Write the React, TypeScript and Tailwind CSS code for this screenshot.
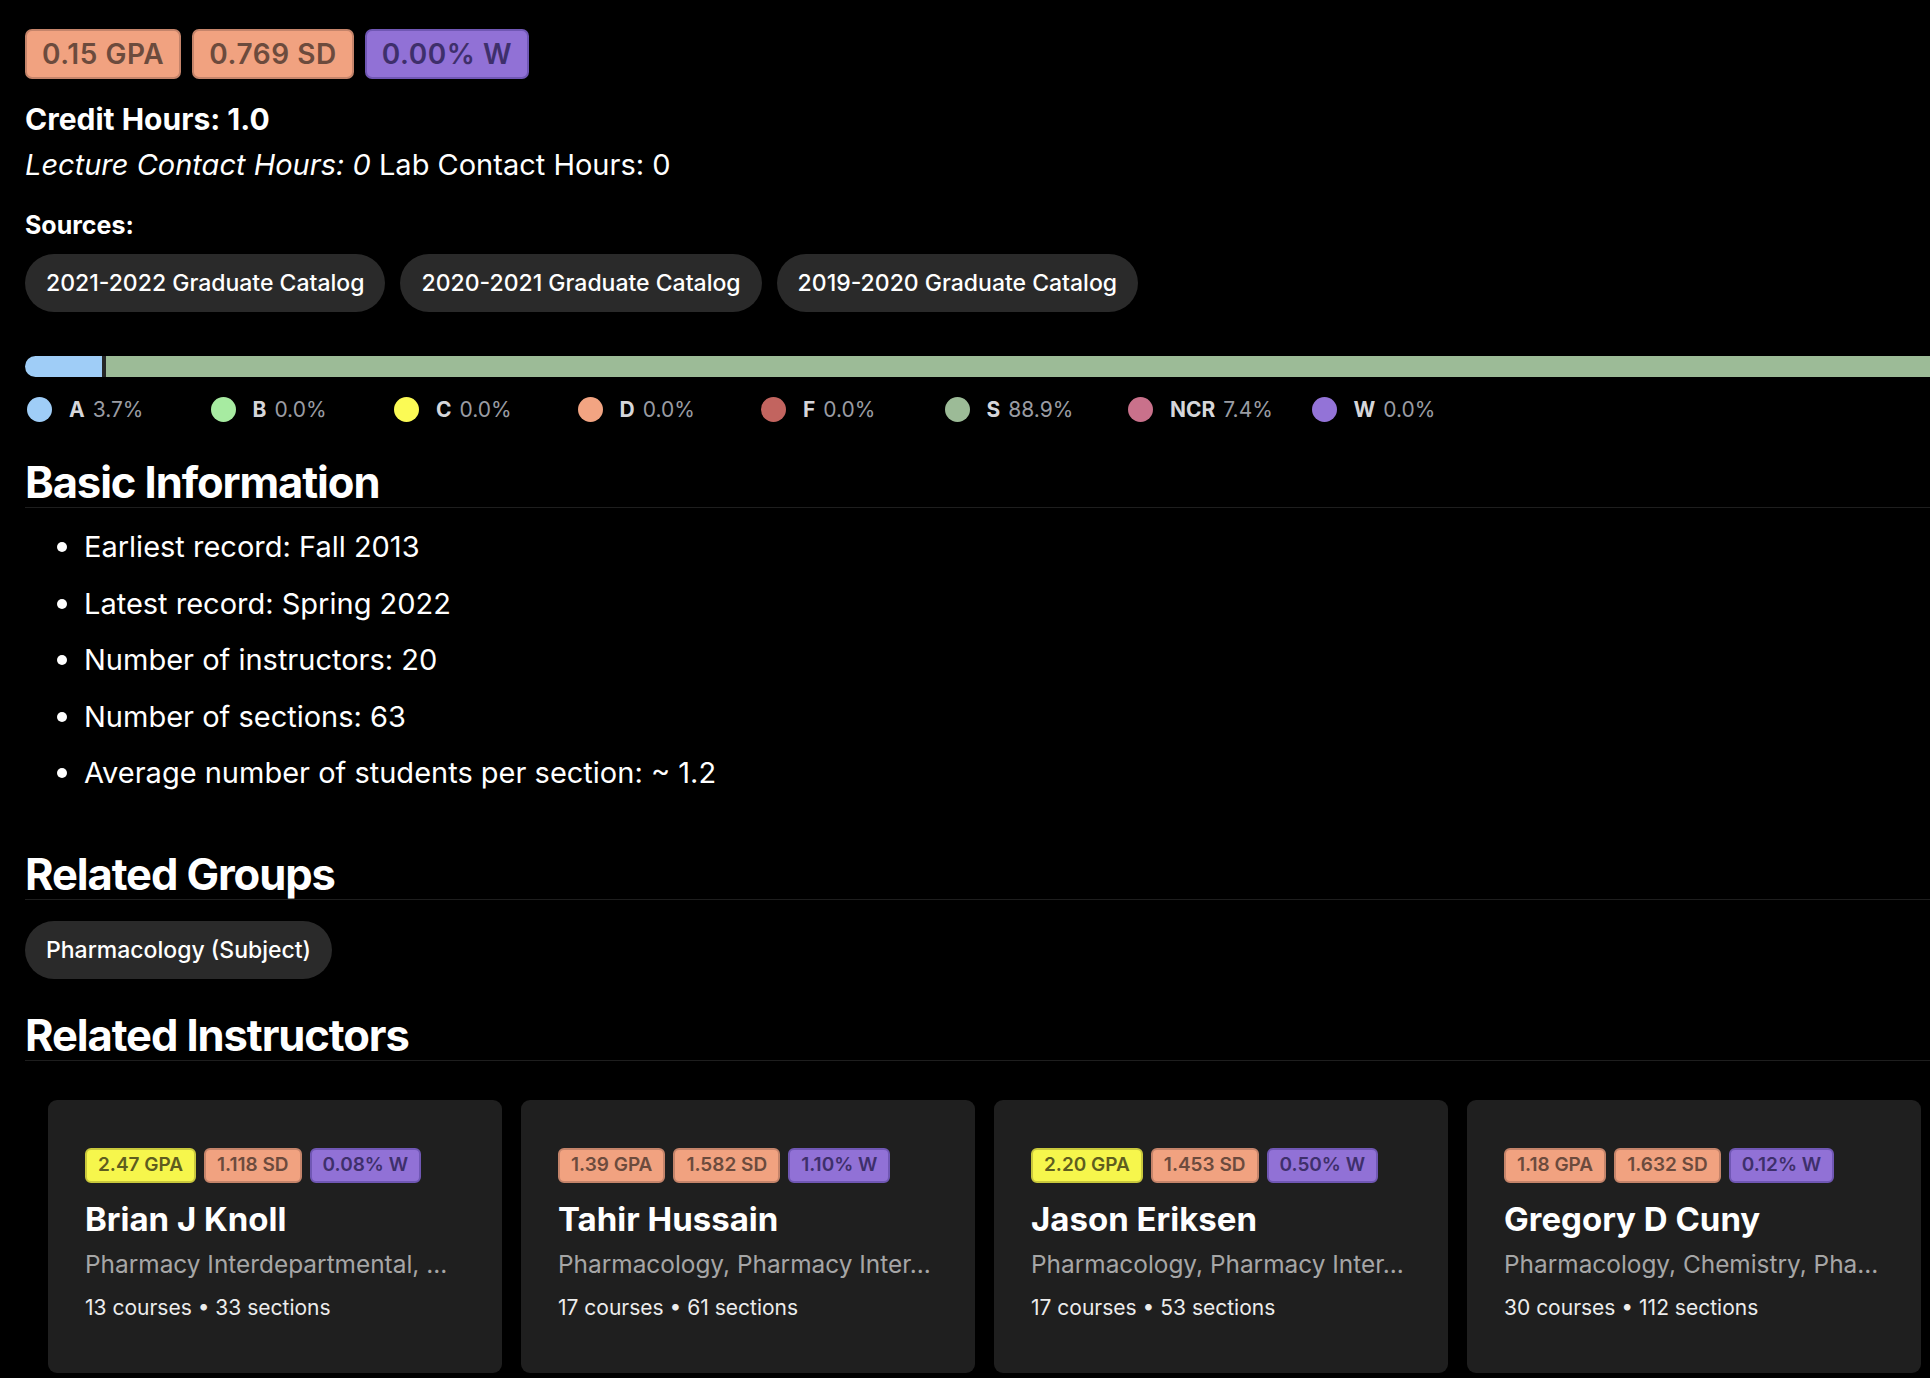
const legend = [
  { label: "A", pct: "3.7%", color: "bg-[#9fcdf7]" },
  { label: "B", pct: "0.0%", color: "bg-[#a7eba1]" },
  { label: "C", pct: "0.0%", color: "bg-[#fbfa55]" },
  { label: "D", pct: "0.0%", color: "bg-[#f2a482]" },
  { label: "F", pct: "0.0%", color: "bg-[#c2645f]" },
  { label: "S", pct: "88.9%", color: "bg-[#9cbb97]" },
  { label: "NCR", pct: "7.4%", color: "bg-[#c9718b]" },
  { label: "W", pct: "0.0%", color: "bg-[#9373d7]" },
];

const segments = [
  { pct: 3.7, color: "bg-[#9fcdf7]" },
  { pct: 88.9, color: "bg-[#9cbb97]" },
  { pct: 7.4, color: "bg-[#c9718b]" },
];

const basics = [
  "Earliest record: Fall 2013",
  "Latest record: Spring 2022",
  "Number of instructors: 20",
  "Number of sections: 63",
  "Average number of students per section: ~ 1.2",
];

type Tone = "orange" | "yellow" | "purple";

const tones: Record<Tone, string> = {
  orange: "bg-[#f1a280] border-[#c5846a] text-[#6c4b3d]",
  yellow: "bg-[#f6f64c] border-[#c9c83c] text-[#5e5d1f]",
  purple: "bg-[#9171d6] border-[#7057b4] text-[#3e2f6b]",
};

const instructors = [
  {
    name: "Brian J Knoll",
    depts: "Pharmacy Interdepartmental, ...",
    gpa: ["2.47 GPA", "yellow"],
    sd: "1.118 SD",
    w: "0.08% W",
    stats: "13 courses • 33 sections",
  },
  {
    name: "Tahir Hussain",
    depts: "Pharmacology, Pharmacy Inter...",
    gpa: ["1.39 GPA", "orange"],
    sd: "1.582 SD",
    w: "1.10% W",
    stats: "17 courses • 61 sections",
  },
  {
    name: "Jason Eriksen",
    depts: "Pharmacology, Pharmacy Inter...",
    gpa: ["2.20 GPA", "yellow"],
    sd: "1.453 SD",
    w: "0.50% W",
    stats: "17 courses • 53 sections",
  },
  {
    name: "Gregory D Cuny",
    depts: "Pharmacology, Chemistry, Pha...",
    gpa: ["1.18 GPA", "orange"],
    sd: "1.632 SD",
    w: "0.12% W",
    stats: "30 courses • 112 sections",
  },
];

function Badge({ tone, children, small }: { tone: Tone; children: string; small?: boolean }) {
  return (
    <span
      className={
        (small
          ? "h-[35px] px-[11px] text-[19px] rounded-[6px] "
          : "h-[50px] px-[15px] text-[28px] tracking-[0.02em] rounded-[7px] ") +
        "flex items-center border-2 font-semibold whitespace-nowrap " +
        tones[tone]
      }
    >
      {children}
    </span>
  );
}

function Pill({ children }: { children: string }) {
  return (
    <span className="flex h-[58px] items-center rounded-full bg-[#2a2a2a] px-[21px] text-[23px] font-medium text-white whitespace-nowrap">
      {children}
    </span>
  );
}

function Heading({ children }: { children: string }) {
  return (
    <h2 className="border-b border-[#1e1e1e] text-[43.5px] leading-[50px] font-bold tracking-tight text-white">
      {children}
    </h2>
  );
}

export default function App() {
  return (
    <div className="min-h-screen overflow-hidden bg-black font-['Inter','Noto_Sans',sans-serif] text-white">
      <div className="w-[2080px] ml-[25px] pt-[29px]">
        <div className="flex gap-[11px]">
          <Badge tone="orange">0.15 GPA</Badge>
          <Badge tone="orange">0.769 SD</Badge>
          <Badge tone="purple">0.00% W</Badge>
        </div>

        <p className="mt-[18px] text-[30px] leading-[45px] font-bold">Credit Hours: 1.0</p>
        <p className="text-[29px] leading-[45px]">
          <i>Lecture Contact Hours: 0</i> Lab Contact Hours: 0
        </p>

        <p className="mt-[23px] text-[25px] leading-[30px] font-bold">Sources:</p>
        <div className="mt-[14px] flex gap-[15px]">
          <Pill>2021-2022 Graduate Catalog</Pill>
          <Pill>2020-2021 Graduate Catalog</Pill>
          <Pill>2019-2020 Graduate Catalog</Pill>
        </div>

        <div className="mt-[44px] flex h-[21px] w-full overflow-hidden rounded-full">
          {segments.map((s, i) => (
            <div
              key={i}
              className={s.color + (i > 0 ? " border-l-4 border-[#262626]" : "")}
              style={{ width: `${s.pct}%` }}
            />
          ))}
        </div>

        <div className="mt-[20px] flex">
          {legend.map((l) => (
            <div key={l.label} className="flex w-[183.5px] items-center">
              <span className={"ml-[2px] h-[25px] w-[25px] rounded-full " + l.color} />
              <span className="ml-[17px] text-[21px] leading-[25px] font-bold text-[#d6d6da]">{l.label}</span>
              <span className="ml-[8px] text-[21px] leading-[25px] text-[#9a9ca3]">{l.pct}</span>
            </div>
          ))}
        </div>

        <div className="mt-[35px]">
          <Heading>Basic Information</Heading>
        </div>
        <ul className="mt-[19px] flex flex-col gap-[16.5px]">
          {basics.map((b) => (
            <li key={b} className="flex items-center pl-[32px] text-[29px] leading-[40px]">
              <span className="h-[10px] w-[10px] rounded-full bg-white" />
              <span className="ml-[17px]">{b}</span>
            </li>
          ))}
        </ul>

        <div className="mt-[56px]">
          <Heading>Related Groups</Heading>
        </div>
        <div className="mt-[21px] flex">
          <Pill>Pharmacology (Subject)</Pill>
        </div>

        <div className="mt-[31px]">
          <Heading>Related Instructors</Heading>
        </div>

        <div className="mt-[39px] ml-[23px] flex gap-[19px]">
          {instructors.map((p) => (
            <div key={p.name} className="h-[273px] w-[454px] shrink-0 rounded-[9px] bg-[#1f1f1f] px-[37px] pt-[48px]">
              <div className="flex gap-[8px]">
                <Badge small tone={p.gpa[1] as Tone}>{p.gpa[0]}</Badge>
                <Badge small tone="orange">{p.sd}</Badge>
                <Badge small tone="purple">{p.w}</Badge>
              </div>
              <p className="mt-[16px] text-[33px] leading-[40px] font-bold">{p.name}</p>
              <p className="mt-[9px] text-[24.4px] leading-[32px] whitespace-nowrap text-[#a6a6a6]">
                {p.depts}
              </p>
              <p className="mt-[13px] text-[21px] leading-[30px] text-[#ececec]">{p.stats}</p>
            </div>
          ))}
        </div>
      </div>
    </div>
  );
}
